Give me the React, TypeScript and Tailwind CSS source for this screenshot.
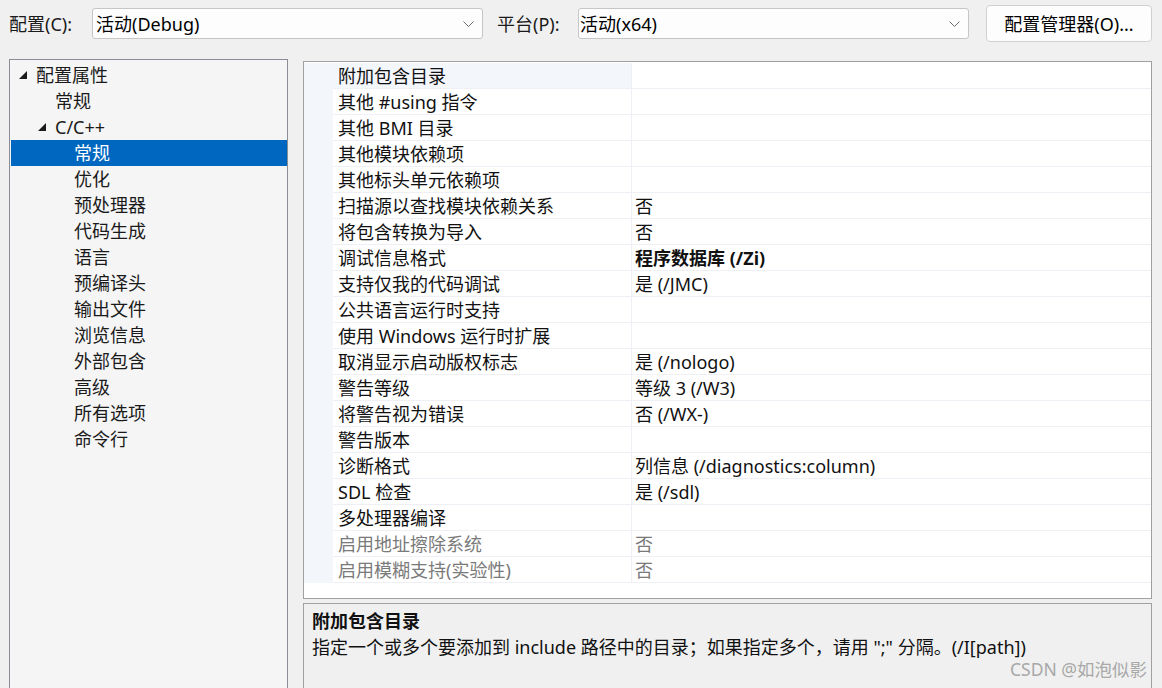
import React from "react";

const font = { fontFamily: '"Noto Sans", "Noto Sans CJK SC", sans-serif' };

function Chevron() {
  return (
    <svg width="11" height="6" viewBox="0 0 11 6" className="shrink-0">
      <polyline points="0.5,0.5 5.5,5.5 10.5,0.5" fill="none" stroke="#6b6b6b" strokeWidth="1" />
    </svg>
  );
}

function Tri() {
  return (
    <svg width="8" height="8" viewBox="0 0 8 8">
      <polygon points="8,0 8,8 0,8" fill="#1a1a1a" />
    </svg>
  );
}

type TreeItem = { label: string; level: number; tri?: boolean; sel?: boolean };

const tree: TreeItem[] = [
  { label: "配置属性", level: 0, tri: true },
  { label: "常规", level: 1 },
  { label: "C/C++", level: 1, tri: true },
  { label: "常规", level: 2, sel: true },
  { label: "优化", level: 2 },
  { label: "预处理器", level: 2 },
  { label: "代码生成", level: 2 },
  { label: "语言", level: 2 },
  { label: "预编译头", level: 2 },
  { label: "输出文件", level: 2 },
  { label: "浏览信息", level: 2 },
  { label: "外部包含", level: 2 },
  { label: "高级", level: 2 },
  { label: "所有选项", level: 2 },
  { label: "命令行", level: 2 },
];

type Row = { name: string; value?: string; bold?: boolean; gray?: boolean; first?: boolean };

const rows: Row[] = [
  { name: "附加包含目录", first: true },
  { name: "其他 #using 指令" },
  { name: "其他 BMI 目录" },
  { name: "其他模块依赖项" },
  { name: "其他标头单元依赖项" },
  { name: "扫描源以查找模块依赖关系", value: "否" },
  { name: "将包含转换为导入", value: "否" },
  { name: "调试信息格式", value: "程序数据库 (/Zi)", bold: true },
  { name: "支持仅我的代码调试", value: "是 (/JMC)" },
  { name: "公共语言运行时支持" },
  { name: "使用 Windows 运行时扩展" },
  { name: "取消显示启动版权标志", value: "是 (/nologo)" },
  { name: "警告等级", value: "等级 3 (/W3)" },
  { name: "将警告视为错误", value: "否 (/WX-)" },
  { name: "警告版本" },
  { name: "诊断格式", value: "列信息 (/diagnostics:column)" },
  { name: "SDL 检查", value: "是 (/sdl)" },
  { name: "多处理器编译" },
  { name: "启用地址擦除系统", value: "否", gray: true },
  { name: "启用模糊支持(实验性)", value: "否", gray: true },
];

const padByLevel = ["pl-[8px]", "pl-[27px]", "pl-[46px]"];

export default function App() {
  return (
    <div
      className="relative w-[1162px] h-[688px] overflow-hidden bg-[#f0f0f0] text-[18px] text-black"
      style={font}
    >
      {/* top bar */}
      <div className="flex items-center h-[37px] mt-[5px] pl-[9px]">
        <div className="w-[83px] leading-[24px] text-[#1a1a1a]">配置(C):</div>
        <div className="flex items-center justify-between w-[391px] h-[31px] bg-[#fdfdfd] border border-[#c6c6c6] rounded-[3px] pl-[3px] pr-[8px]">
          <span className="leading-[24px]">活动(Debug)</span>
          <Chevron />
        </div>
        <div className="ml-[14px] w-[81px] leading-[24px] text-[#1a1a1a]">平台(P):</div>
        <div className="flex items-center justify-between w-[391px] h-[31px] bg-[#fdfdfd] border border-[#c6c6c6] rounded-[3px] pl-[1px] pr-[8px]">
          <span className="leading-[24px]">活动(x64)</span>
          <Chevron />
        </div>
        <div className="ml-[17px] flex items-center justify-center w-[166px] h-[37px] bg-[#fdfdfd] border border-[#d0d0d0] rounded-[4px]">
          <span className="leading-[24px]">配置管理器(O)...</span>
        </div>
      </div>

      {/* main */}
      <div className="flex mt-[17px] pl-[9px] h-[700px]">
        {/* tree */}
        <div className="w-[279px] h-full bg-[#f5f5f5] border border-[#8a8d93] pt-[2px] pl-[1px]">
          {tree.map((t, i) => (
            <div
              key={i}
              className={
                "flex items-center h-[26px] " +
                padByLevel[t.level] +
                (t.sel ? " bg-[#0067c0] text-white" : " text-[#1a1a1a]")
              }
            >
              <div className="w-[17px] flex items-center">{t.tri ? <Tri /> : null}</div>
              <span className="leading-[26px]">{t.label}</span>
            </div>
          ))}
        </div>

        {/* right column */}
        <div className="ml-[15px] w-[849px] flex flex-col">
          <div className="mt-[2px] h-[538px] bg-white border border-[#a0a0a0] pt-[1px]">
            {rows.map((r, i) => (
              <div key={i} className="flex h-[26px]">
                <div className="w-[29px] bg-[#f3f6fb]" />
                <div
                  className={
                    "w-[298px] pl-[5px] border-b border-[#eef0f6] leading-[26px] whitespace-nowrap " +
                    (r.first ? "bg-[#f3f6fb] " : "") +
                    (r.gray ? "text-[#7a7a7a]" : "text-[#111]")
                  }
                >
                  {r.name}
                </div>
                <div className="w-px bg-[#eef0f6]" />
                <div
                  className={
                    "flex-1 pl-[3px] border-b border-[#eef0f6] leading-[26px] whitespace-nowrap " +
                    (r.bold ? "font-bold " : "") +
                    (r.gray ? "text-[#7a7a7a]" : "text-[#111]")
                  }
                >
                  {r.value ?? ""}
                </div>
              </div>
            ))}
          </div>
          <div className="mt-[4px] flex-1 bg-[#f0f0f0] border border-[#a0a0a0] pl-[8px] pt-[4px]">
            <div className="font-bold leading-[26px] text-[#111]">附加包含目录</div>
            <div className="leading-[26px] text-[#111]">
              指定一个或多个要添加到 include 路径中的目录；如果指定多个，请用 ";" 分隔。(/I[path])
            </div>
          </div>
        </div>
      </div>

      <div className="absolute right-[15px] top-[657px] text-[17.5px] leading-[24px] text-[#a8a8a8]">
        CSDN @如泡似影
      </div>
    </div>
  );
}
